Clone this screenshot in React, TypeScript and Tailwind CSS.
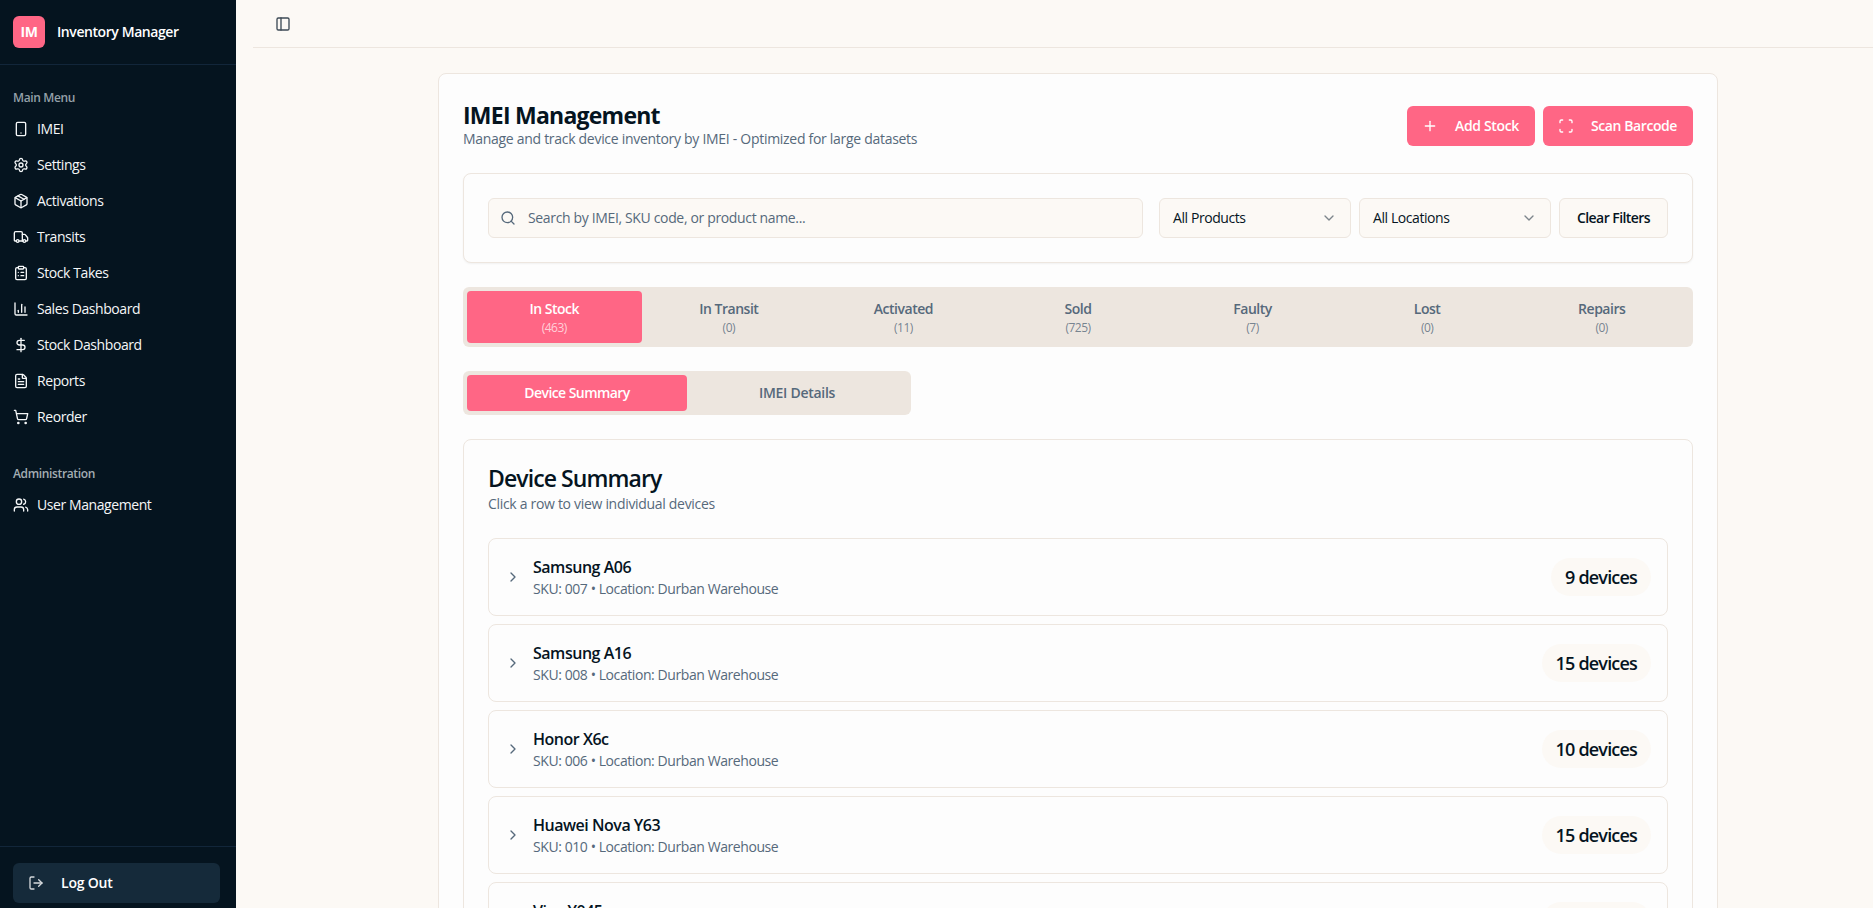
import React from "react";
import { Smartphone, Settings, Package, Truck, ClipboardList, ChartColumn, DollarSign, FileText, ShoppingCart, Users, LogOut, PanelLeft, Plus, Scan, Search, ChevronDown, ChevronRight } from "lucide-react";

const menu = [
  { label: "IMEI", icon: Smartphone },
  { label: "Settings", icon: Settings },
  { label: "Activations", icon: Package },
  { label: "Transits", icon: Truck },
  { label: "Stock Takes", icon: ClipboardList },
  { label: "Sales Dashboard", icon: ChartColumn },
  { label: "Stock Dashboard", icon: DollarSign },
  { label: "Reports", icon: FileText },
  { label: "Reorder", icon: ShoppingCart },
];

const tabs = [
  ["In Stock", "(463)"],
  ["In Transit", "(0)"],
  ["Activated", "(11)"],
  ["Sold", "(725)"],
  ["Faulty", "(7)"],
  ["Lost", "(0)"],
  ["Repairs", "(0)"],
];

const rows = [
  ["Samsung A06", "007", "9 devices"],
  ["Samsung A16", "008", "15 devices"],
  ["Honor X6c", "006", "10 devices"],
  ["Huawei Nova Y63", "010", "15 devices"],
  ["Vivo Y045", "011", "12 devices"],
];

function NavItem({ label, icon: Icon }: { label: string; icon: React.ElementType }) {
  return (
    <div className="mb-1 flex h-8 items-center gap-2 text-sm tracking-[-0.03em] text-[#f5f7f8]">
      <Icon className="size-4 shrink-0" strokeWidth={2} />
      <span>{label}</span>
    </div>
  );
}

export default function App() {
  return (
    <div className="flex h-screen overflow-hidden bg-[#fcf9f5] text-[#05141f] [font-family:'Open_Sans',sans-serif] tracking-[-0.02em]">
      <aside className="flex w-[236px] shrink-0 flex-col bg-[#05141f]">
        <div className="flex h-[65px] shrink-0 items-start gap-[12px] border-b border-[#12263a] pt-4 pl-[13px]">
          <div className="flex size-8 items-center justify-center rounded-md bg-[#ff6685] text-sm font-bold text-white">IM</div>
          <div className="flex h-8 items-center text-sm font-semibold tracking-[-0.03em] text-white">Inventory Manager</div>
        </div>
        <div className="flex-1 px-[13px] pt-[23px]">
          <div className="mb-[5px] text-xs leading-5 font-semibold tracking-[-0.03em] text-[#94a0a8]">Main Menu</div>
          {menu.map((m) => (
            <NavItem key={m.label} {...m} />
          ))}
          <div className="mt-[31px] mb-[5px] text-xs leading-5 font-semibold tracking-[-0.03em] text-[#a3adb3]">Administration</div>
          <NavItem label="User Management" icon={Users} />
        </div>
        <div className="shrink-0 border-t border-[#12263a] pt-4 pr-4 pb-[5px] pl-[13px]">
          <div className="flex h-10 items-center gap-[17px] rounded-md bg-[#152a3a] pl-[15px] text-sm font-semibold tracking-[-0.015em] text-white">
            <LogOut className="size-4 text-[#d5d9dc]" />
            <span>Log Out</span>
          </div>
        </div>
      </aside>

      <main className="min-w-0 flex-1 pl-[17px]">
        <header className="flex h-12 items-center border-b border-[#ede6df] pl-4">
          <div className="flex size-7 items-center justify-center text-[#3d4a55]">
            <PanelLeft className="size-4" />
          </div>
        </header>
        <div className="mt-[25px] ml-[185px] w-[1280px] rounded-lg border border-[#ede6df] bg-[#fdfdfd] px-6 pt-[27px]">
          <div className="mb-6 flex items-start justify-between">
            <div>
              <h1 className="text-[23px] leading-7 font-bold tracking-[-0.033em]">IMEI Management</h1>
              <p className="text-sm leading-5 tracking-[-0.021em] text-[#56697b]">Manage and track device inventory by IMEI - Optimized for large datasets</p>
            </div>
            <div className="mt-[5px] flex gap-2">
              <button className="flex h-10 items-center gap-[17px] rounded-md bg-[#ff6685] pr-4 pl-[15px] text-sm font-semibold tracking-[-0.024em] text-white">
                <Plus className="size-4" />
                Add Stock
              </button>
              <button className="flex h-10 items-center gap-[17px] rounded-md bg-[#ff6685] pr-4 pl-[15px] text-sm font-semibold tracking-[-0.03em] text-white">
                <Scan className="size-4" />
                Scan Barcode
              </button>
            </div>
          </div>

          <div className="mb-6 flex gap-4 rounded-lg border border-[#ede6df] bg-[#fdfdfd] p-6 shadow-xs">
            <div className="flex h-10 flex-1 items-center gap-3 rounded-md border border-[#ede6df] bg-[#fcf9f5] pl-[11px] text-sm tracking-[-0.025em] text-[#56697b]">
              <Search className="size-4 shrink-0" />
              <span>Search by IMEI, SKU code, or product name...</span>
            </div>
            <div className="flex gap-2">
              {["All Products", "All Locations"].map((s) => (
                <div key={s} className="flex h-10 w-[192px] items-center justify-between rounded-md border border-[#ede6df] bg-[#fcf9f5] px-[13px] text-sm tracking-[-0.03em]">
                  <span>{s}</span>
                  <ChevronDown className="size-4 text-[#7d858b]" />
                </div>
              ))}
              <button className="flex h-10 w-[109px] items-center justify-center rounded-md border border-[#ede6df] bg-[#fcf9f5] text-sm font-semibold tracking-[-0.04em]">Clear Filters</button>
            </div>
          </div>

          <div className="mb-6 grid h-[60px] grid-cols-7 rounded-md bg-[#ede6df] p-1">
            {tabs.map(([label, count], i) => (
              <div key={label} className={`flex flex-col items-center justify-center rounded-sm text-sm font-semibold tracking-[-0.035em] ${i === 0 ? "bg-[#ff6685] text-white" : "text-[#56697b]"}`}>
                <span className="leading-5">{label}</span>
                <span className={`mt-px text-xs leading-4 font-normal ${i === 0 ? "text-white/70" : "text-[#56697b]/80"}`}>{count}</span>
              </div>
            ))}
          </div>

          <div className="mb-6 grid h-11 w-[448px] grid-cols-2 rounded-md bg-[#ede6df] p-1">
            <div className="flex items-center justify-center rounded-sm bg-[#ff6685] text-sm font-semibold tracking-[-0.04em] text-white">Device Summary</div>
            <div className="flex items-center justify-center text-sm font-semibold tracking-[-0.02em] text-[#56697b]">IMEI Details</div>
          </div>

          <div className="rounded-lg border border-[#ede6df] bg-[#fdfdfd] px-6 pt-[22px]">
            <h2 className="text-[23px] leading-8 font-semibold tracking-[-0.04em]">Device Summary</h2>
            <p className="mb-6 text-sm leading-5 tracking-[-0.022em] text-[#56697b]">Click a row to view individual devices</p>
            <div className="flex flex-col gap-2">
              {rows.map(([name, sku, count]) => (
                <div key={name} className="flex items-center justify-between rounded-lg border border-[#ede6df] p-4">
                  <div className="flex items-center gap-3">
                    <ChevronRight className="size-4 text-[#56697b]" />
                    <div>
                      <div className="text-base leading-6 font-semibold tracking-[-0.03em]">{name}</div>
                      <div className="text-sm leading-5 tracking-[-0.03em] text-[#56697b]">SKU: {sku} • Location: Durban Warehouse</div>
                    </div>
                  </div>
                  <div className="flex h-[38px] items-center rounded-full bg-[#fcf9f5] px-[14px] text-lg font-semibold tracking-[-0.045em]">{count}</div>
                </div>
              ))}
            </div>
          </div>
        </div>
      </main>
    </div>
  );
}
